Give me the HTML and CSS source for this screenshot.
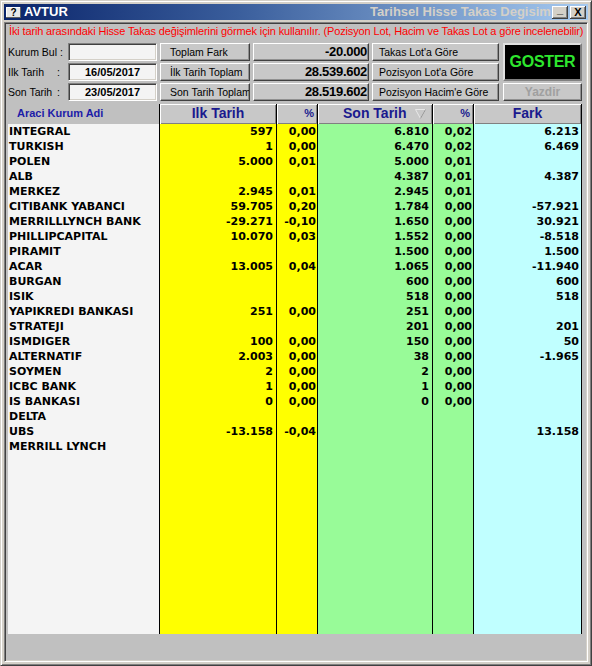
FILE: index.html
```html
<!DOCTYPE html>
<html lang="tr">
<head>
<meta charset="utf-8">
<title>AVTUR</title>
<link rel="stylesheet" href="styles.css">
</head>
<body>
<div class="window">
  <div class="titlebar">
    <span class="ticon">?</span>
    <span class="tname">AVTUR</span>
    <span class="tcaption">Tarihsel Hisse Takas Degisim</span>
    <span class="tbtns"><span class="tbtn tmin">_</span><span class="tbtn tclose">X</span></span>
  </div>
  <div class="client">
    <div class="hint">İki tarih arasındaki Hisse Takas değişimlerini görmek için kullanılır. (Pozisyon Lot, Hacim ve Takas Lot a göre incelenebilir)</div>
    <div class="controls">
      <div class="lbl">Kurum Bul :</div>
      <div class="field"></div>
      <div class="btn">Toplam Fark</div>
      <div class="val">-20.000</div>
      <div class="btn btn-r">Takas Lot'a Göre</div>
      <div class="goster">GOSTER</div>

      <div class="lbl"><span class="lbl-t">Ilk Tarih</span>:</div>
      <div class="field">16/05/2017</div>
      <div class="btn">İlk Tarih Toplam</div>
      <div class="val">28.539.602</div>
      <div class="btn btn-r">Pozisyon Lot'a Göre</div>

      <div class="lbl"><span class="lbl-t">Son Tarih</span>:</div>
      <div class="field">23/05/2017</div>
      <div class="btn">Son Tarih Toplam</div>
      <div class="val">28.519.602</div>
      <div class="btn btn-r">Pozisyon Hacim'e Göre</div>
      <div class="btn yazdir">Yazdir</div>
    </div>

    <div class="grid">
      <div class="row head">
        <div class="hcell hname">Araci Kurum Adi</div>
        <div class="hcell">Ilk Tarih</div>
        <div class="hcell hpct">%</div>
        <div class="hcell hson">Son Tarih <svg class="sort" width="11" height="11" viewBox="0 0 11 11"><path d="M0.5 1.5 H10.5 L5.5 10.5 Z" fill="none" stroke="#e8e8e8" stroke-width="1"/><path d="M5.5 10.5 L10.5 1.5" stroke="#909090" stroke-width="1" fill="none"/></svg></div>
        <div class="hcell hpct">%</div>
        <div class="hcell">Fark</div>
      </div>

      <div class="row"><div class="cell n">INTEGRAL</div><div class="cell y">597</div><div class="cell y p">0,00</div><div class="cell g">6.810</div><div class="cell g p">0,02</div><div class="cell c">6.213</div></div>
      <div class="row"><div class="cell n">TURKISH</div><div class="cell y">1</div><div class="cell y p">0,00</div><div class="cell g">6.470</div><div class="cell g p">0,02</div><div class="cell c">6.469</div></div>
      <div class="row"><div class="cell n">POLEN</div><div class="cell y">5.000</div><div class="cell y p">0,01</div><div class="cell g">5.000</div><div class="cell g p">0,01</div><div class="cell c"></div></div>
      <div class="row"><div class="cell n">ALB</div><div class="cell y"></div><div class="cell y p"></div><div class="cell g">4.387</div><div class="cell g p">0,01</div><div class="cell c">4.387</div></div>
      <div class="row"><div class="cell n">MERKEZ</div><div class="cell y">2.945</div><div class="cell y p">0,01</div><div class="cell g">2.945</div><div class="cell g p">0,01</div><div class="cell c"></div></div>
      <div class="row"><div class="cell n">CITIBANK YABANCI</div><div class="cell y">59.705</div><div class="cell y p">0,20</div><div class="cell g">1.784</div><div class="cell g p">0,00</div><div class="cell c">-57.921</div></div>
      <div class="row"><div class="cell n">MERRILLLYNCH BANK</div><div class="cell y">-29.271</div><div class="cell y p">-0,10</div><div class="cell g">1.650</div><div class="cell g p">0,00</div><div class="cell c">30.921</div></div>
      <div class="row"><div class="cell n">PHILLIPCAPITAL</div><div class="cell y">10.070</div><div class="cell y p">0,03</div><div class="cell g">1.552</div><div class="cell g p">0,00</div><div class="cell c">-8.518</div></div>
      <div class="row"><div class="cell n">PIRAMIT</div><div class="cell y"></div><div class="cell y p"></div><div class="cell g">1.500</div><div class="cell g p">0,00</div><div class="cell c">1.500</div></div>
      <div class="row"><div class="cell n">ACAR</div><div class="cell y">13.005</div><div class="cell y p">0,04</div><div class="cell g">1.065</div><div class="cell g p">0,00</div><div class="cell c">-11.940</div></div>
      <div class="row"><div class="cell n">BURGAN</div><div class="cell y"></div><div class="cell y p"></div><div class="cell g">600</div><div class="cell g p">0,00</div><div class="cell c">600</div></div>
      <div class="row"><div class="cell n">ISIK</div><div class="cell y"></div><div class="cell y p"></div><div class="cell g">518</div><div class="cell g p">0,00</div><div class="cell c">518</div></div>
      <div class="row"><div class="cell n">YAPIKREDI BANKASI</div><div class="cell y">251</div><div class="cell y p">0,00</div><div class="cell g">251</div><div class="cell g p">0,00</div><div class="cell c"></div></div>
      <div class="row"><div class="cell n">STRATEJI</div><div class="cell y"></div><div class="cell y p"></div><div class="cell g">201</div><div class="cell g p">0,00</div><div class="cell c">201</div></div>
      <div class="row"><div class="cell n">ISMDIGER</div><div class="cell y">100</div><div class="cell y p">0,00</div><div class="cell g">150</div><div class="cell g p">0,00</div><div class="cell c">50</div></div>
      <div class="row"><div class="cell n">ALTERNATIF</div><div class="cell y">2.003</div><div class="cell y p">0,00</div><div class="cell g">38</div><div class="cell g p">0,00</div><div class="cell c">-1.965</div></div>
      <div class="row"><div class="cell n">SOYMEN</div><div class="cell y">2</div><div class="cell y p">0,00</div><div class="cell g">2</div><div class="cell g p">0,00</div><div class="cell c"></div></div>
      <div class="row"><div class="cell n">ICBC BANK</div><div class="cell y">1</div><div class="cell y p">0,00</div><div class="cell g">1</div><div class="cell g p">0,00</div><div class="cell c"></div></div>
      <div class="row"><div class="cell n">IS BANKASI</div><div class="cell y">0</div><div class="cell y p">0,00</div><div class="cell g">0</div><div class="cell g p">0,00</div><div class="cell c"></div></div>
      <div class="row"><div class="cell n">DELTA</div><div class="cell y"></div><div class="cell y p"></div><div class="cell g"></div><div class="cell g p"></div><div class="cell c"></div></div>
      <div class="row"><div class="cell n">UBS</div><div class="cell y">-13.158</div><div class="cell y p">-0,04</div><div class="cell g"></div><div class="cell g p"></div><div class="cell c">13.158</div></div>
      <div class="row"><div class="cell n">MERRILL LYNCH</div><div class="cell y"></div><div class="cell y p"></div><div class="cell g"></div><div class="cell g p"></div><div class="cell c"></div></div>
      <div class="row filler"><div class="cell n"></div><div class="cell y"></div><div class="cell y p"></div><div class="cell g"></div><div class="cell g p"></div><div class="cell c"></div></div>
    </div>
  </div>
</div>
</body>
</html>
```

FILE: styles.css
```css
* { box-sizing: border-box; }

html, body {
  margin: 0;
  padding: 0;
  background: #d4d0c8;
  font-family: "Liberation Sans", Arial, sans-serif;
}

.window {
  width: 592px;
  height: 666px;
  background: #d4d0c8;
  border: 1px solid;
  border-color: #d4d0c8 #404040 #404040 #d4d0c8;
  box-shadow: inset 1px 1px #ffffff, inset -1px -1px #808080;
  padding: 3px;
  display: flex;
  flex-direction: column;
}

/* ---------- title bar ---------- */
.titlebar {
  height: 16px;
  flex-shrink: 0;
  background: linear-gradient(to right, #0a246a 0%, #3a5e9c 40%, #a6caf0 100%);
  display: flex;
  align-items: center;
  color: #ffffff;
  font-weight: bold;
  font-size: 13px;
  line-height: 16px;
}

.ticon {
  width: 15px;
  height: 11px;
  margin-left: 2px;
  background: #e8e8e8;
  color: #000;
  font-size: 10px;
  line-height: 11px;
  text-align: center;
  box-shadow: inset -1px -1px #606060, inset 1px 1px #ffffff;
}

.tname {
  width: 346px;
  margin-left: 3px;
  flex-shrink: 0;
}

.tcaption {
  flex: 1;
  min-width: 0;
  overflow: hidden;
  white-space: nowrap;
  color: #d4d0c8;
}

.tbtns {
  display: flex;
  gap: 2px;
  margin-right: 2px;
  margin-left: 1px;
}

.tbtn {
  width: 16px;
  height: 13px;
  background: #d4d0c8;
  box-shadow: inset -1px -1px #404040, inset 1px 1px #ffffff, inset -2px -2px #808080;
  color: #000;
  font-size: 11px;
  font-weight: bold;
  display: flex;
  justify-content: center;
  align-items: center;
  line-height: 11px;
}
.tmin { align-items: flex-start; line-height: 6px; }

/* ---------- client ---------- */
.client {
  margin-top: 2px;
  flex: 1;
  background: #c0c0c0;
  border: 1px solid;
  border-color: #808080 #ffffff #ffffff #808080;
  box-shadow: inset 1px 1px #404040, inset -1px -1px #d4d0c8;
  padding: 1px 5px 0 3px;
  overflow: hidden;
}

.hint {
  height: 14px;
  line-height: 14px;
  font-size: 11px;
  letter-spacing: -0.14px;
  color: #ff0000;
  white-space: nowrap;
  padding-left: 1px;
}

.controls {
  margin-top: 5px;
  display: grid;
  grid-template-columns: 57px 89px 90px 116px 127px 80px;
  grid-template-rows: 18px 18px 18px;
  column-gap: 3px;
  row-gap: 2px;
  font-size: 10.5px;
}

.lbl {
  white-space: nowrap;
  line-height: 18px;
  color: #000;
}
.lbl-t {
  display: inline-block;
  width: 49px;
}

.field {
  background: #f4f4f4;
  border: 1px solid;
  border-color: #808080 #ffffff #ffffff #808080;
  box-shadow: inset 1px 1px #404040, inset -1px -1px #d4d0c8;
  font-weight: bold;
  font-size: 11px;
  text-align: center;
  line-height: 16px;
}

.btn {
  background: #c8c8c8;
  border: 1px solid;
  border-color: #ffffff #404040 #404040 #ffffff;
  box-shadow: inset -1px -1px #909090;
  padding-left: 9px;
  line-height: 16px;
  white-space: nowrap;
  overflow: hidden;
}
.btn-r { padding-left: 6px; }

.val {
  background: #c8c8c8;
  border: 1px solid;
  border-color: #ffffff #404040 #404040 #ffffff;
  box-shadow: inset -1px -1px #909090;
  font-weight: bold;
  font-size: 13px;
  letter-spacing: -0.3px;
  text-align: right;
  padding-right: 1px;
  line-height: 16px;
}

.goster {
  grid-column: 6;
  grid-row: 1 / span 2;
  width: 79px;
  justify-self: end;
  background: #000;
  border: 2px solid;
  border-color: #e0e0e0 #808080 #808080 #e0e0e0;
  color: #2ee62e;
  font-weight: bold;
  font-size: 16px;
  letter-spacing: -0.3px;
  display: flex;
  align-items: center;
  justify-content: center;
}

.yazdir {
  grid-column: 6;
  width: 79px;
  justify-self: end;
  padding-left: 0;
  text-align: center;
  font-weight: bold;
  font-size: 12px;
  color: #a0a0a0;
}

/* ---------- grid ---------- */
.grid {
  margin-top: 3px;
  height: 530px;
  display: grid;
  grid-template-columns: 152px 117px 41px 115px 41px 108px;
  grid-template-rows: 20px repeat(22, 15px) 1fr;
}

.row { display: contents; }

.hcell {
  background: #c8c8c8;
  border-right: 1px solid #000;
  box-shadow: inset 1px 1px #ffffff, inset -1px -1px #808080;
  color: #1a1a8e;
  font-weight: bold;
  font-size: 14px;
  line-height: 19px;
  text-align: center;
  white-space: nowrap;
  overflow: hidden;
}
.hname {
  background: #c0c0c0;
  box-shadow: none;
  font-size: 11px;
  color: #1c1ca8;
  text-align: left;
  padding-left: 9px;
}
.hpct {
  font-size: 11px;
  text-align: right;
  padding-right: 3px;
}
.hson {
  text-align: left;
  padding-left: 25px;
}
.sort {
  vertical-align: -1px;
  margin-left: 5px;
}

.cell {
  border-right: 1px solid #000;
  font-family: "DejaVu Sans", Verdana, sans-serif;
  font-weight: bold;
  font-size: 11px;
  line-height: 15px;
  white-space: nowrap;
  overflow: hidden;
  text-align: right;
  padding-right: 3px;
  color: #000;
}
.n { background: #f4f4f4; text-align: left; padding-left: 1px; }
.y { background: #ffff00; }
.g { background: #98fb98; }
.c { background: #c0ffff; padding-right: 2px; }
.p { padding-right: 1px; }
```
